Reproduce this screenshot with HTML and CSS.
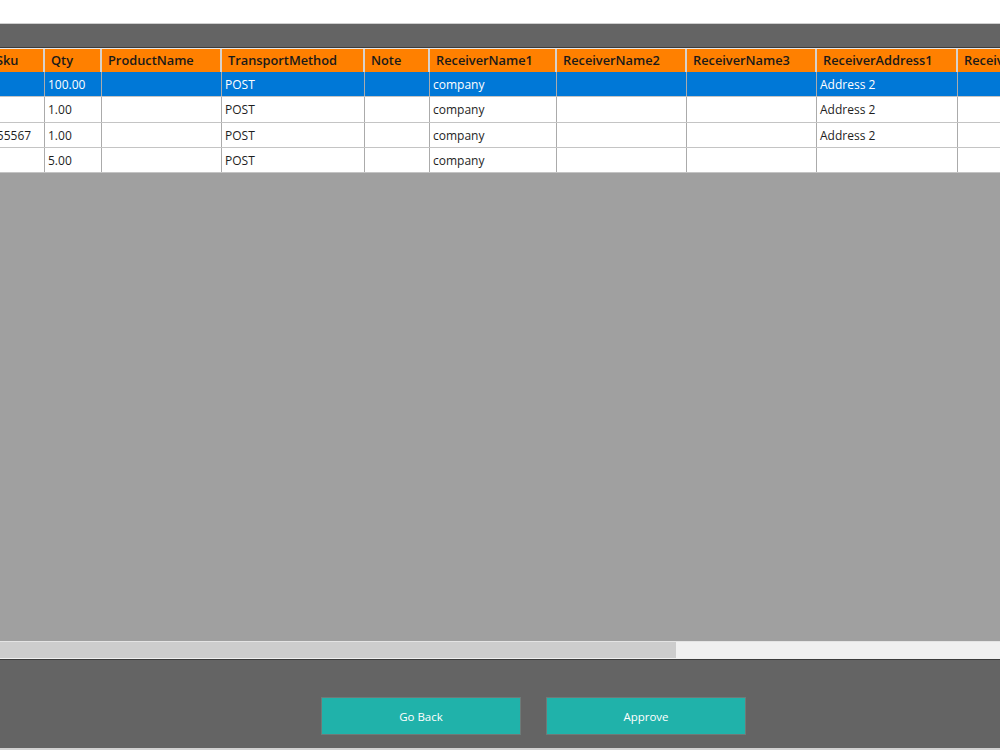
FILE: index.html
```html
<!DOCTYPE html>
<html>
<head>
<meta charset="utf-8">
<link rel="stylesheet" href="styles.css">
</head>
<body>
<div class="window">
  <div class="top-space"></div>
  <div class="toolbar"></div>
  <div class="grid-area">
    <div class="grid-scroll">
      <div class="grid">
        <div class="row head">
          <div class="cell">Sku</div>
          <div class="cell">Qty</div>
          <div class="cell">ProductName</div>
          <div class="cell">TransportMethod</div>
          <div class="cell">Note</div>
          <div class="cell">ReceiverName1</div>
          <div class="cell">ReceiverName2</div>
          <div class="cell">ReceiverName3</div>
          <div class="cell">ReceiverAddress1</div>
          <div class="cell">ReceiverAddress2</div>
        </div>
        <div class="row selected">
          <div class="cell sku"></div>
          <div class="cell">100.00</div>
          <div class="cell"></div>
          <div class="cell">POST</div>
          <div class="cell"></div>
          <div class="cell">company</div>
          <div class="cell"></div>
          <div class="cell"></div>
          <div class="cell">Address 2</div>
          <div class="cell"></div>
        </div>
        <div class="row">
          <div class="cell sku"></div>
          <div class="cell">1.00</div>
          <div class="cell"></div>
          <div class="cell">POST</div>
          <div class="cell"></div>
          <div class="cell">company</div>
          <div class="cell"></div>
          <div class="cell"></div>
          <div class="cell">Address 2</div>
          <div class="cell"></div>
        </div>
        <div class="row">
          <div class="cell sku">555567</div>
          <div class="cell">1.00</div>
          <div class="cell"></div>
          <div class="cell">POST</div>
          <div class="cell"></div>
          <div class="cell">company</div>
          <div class="cell"></div>
          <div class="cell"></div>
          <div class="cell">Address 2</div>
          <div class="cell"></div>
        </div>
        <div class="row">
          <div class="cell sku"></div>
          <div class="cell">5.00</div>
          <div class="cell"></div>
          <div class="cell">POST</div>
          <div class="cell"></div>
          <div class="cell">company</div>
          <div class="cell"></div>
          <div class="cell"></div>
          <div class="cell"></div>
          <div class="cell"></div>
        </div>
      </div>
    </div>
  </div>
  <div class="hscroll">
    <div class="hscroll-thumb"></div>
  </div>
  <div class="bottom-panel">
    <button class="btn">Go Back</button>
    <button class="btn">Approve</button>
  </div>
  <div class="bottom-strip"></div>
</div>
</body>
</html>
```

FILE: styles.css
```css
* {
  box-sizing: border-box;
}

html, body {
  margin: 0;
  padding: 0;
  background: #ffffff;
}

body {
  font-family: "Open Sans", "Noto Sans", sans-serif;
  color: #1e1e1e;
}

.window {
  width: 1000px;
  height: 750px;
  display: flex;
  flex-direction: column;
  overflow: hidden;
}

.top-space {
  height: 23px;
  background: #ffffff;
  flex: none;
}

.toolbar {
  height: 25px;
  flex: none;
  background: #646464;
  border-top: 1px solid #cfcfcf;
  border-bottom: 1px solid #3c3c3c;
}

.grid-area {
  flex: 1;
  background: #a0a0a0;
  overflow: hidden;
}

.grid-scroll {
  overflow: hidden;
  width: 100%;
}

.grid {
  margin-left: -10px;
  width: max-content;
}

.row {
  display: grid;
  grid-template-columns: 55px 57px 120px 143px 65px 127px 130px 130px 141px 150px;
  height: 25.25px;
  background: #ffffff;
  border-bottom: 1px solid #c4c4c4;
}

.row .cell {
  border-right: 1px solid #ababab;
  padding-left: 3px;
  font-size: 12px;
  line-height: 25px;
  white-space: nowrap;
  overflow: hidden;
}

.row .cell.sku {
  padding-left: 0;
}

.row.head {
  height: 24px;
  background: #ff8000;
  border-top: 1px solid #e6e6e6;
  border-bottom: none;
}

.row.head .cell {
  border-right: 2px solid #d8d2cc;
  padding-left: 6px;
  font-size: 12.8px;
  font-weight: 600;
  line-height: 23px;
  color: #1a1a1a;
}

.row.selected {
  background: #0078d7;
  color: #ffffff;
}

.hscroll {
  flex: none;
  height: 19px;
  background: #f0f0f0;
  border-top: 1px solid #e4e4e4;
  border-bottom: 1px solid #3c3c3c;
  padding-bottom: 1px;
  display: flex;
}

.hscroll-thumb {
  width: 676px;
  background: #cdcdcd;
}

.bottom-panel {
  flex: none;
  height: 88px;
  background: #646464;
  display: flex;
  align-items: flex-start;
  gap: 25px;
  padding-top: 37px;
  padding-left: 321px;
}

.btn {
  width: 200px;
  height: 38px;
  background: #20b2aa;
  border: 1px solid #6e7a78;
  color: #ffffff;
  font-family: "Open Sans", "Noto Sans", sans-serif;
  font-size: 11.5px;
  padding: 0;
}

.bottom-strip {
  flex: none;
  height: 2px;
  background: #d2d2d2;
}
```
